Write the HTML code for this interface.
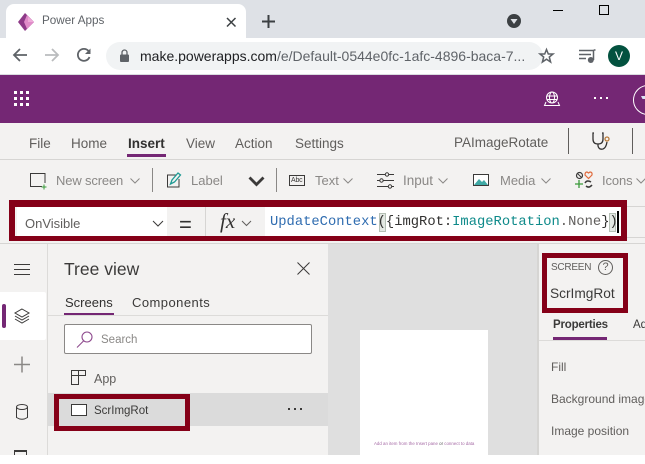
<!DOCTYPE html>
<html><head><meta charset="utf-8"><style>
html,body{margin:0;padding:0;background:#fff}
#p{position:relative;width:645px;height:464px;overflow:hidden;background:#fff;font-family:"Liberation Sans",sans-serif}
#c{position:absolute;left:0;top:0;width:645px;height:455px;overflow:hidden;background:#f3f2f1}
.a{position:absolute}
.t{position:absolute;white-space:nowrap;line-height:1}
svg{position:absolute;overflow:visible}
.m{font-family:"Liberation Mono",monospace}
</style></head><body><div id="p"><div id="c">
<!-- browser chrome -->
<div class="a" style="left:0;top:0;width:645px;height:38px;background:#dee1e6"></div>
<div class="a" style="left:6px;top:4px;width:240px;height:34px;background:#fff;border-radius:8px 8px 0 0"></div>
<svg style="left:17px;top:12px" width="20" height="20" viewBox="0 0 20 20"><path d="M8 1L17 10L8 19L1 10Z" fill="#8e3a88"/><path d="M10 3L17 10L10 17L7 10Z" fill="#e08cc9"/><path d="M11 5L17 10L11 10Z" fill="#eeaad8"/></svg>
<div class="t" style="left:42px;top:15px;font-size:11.700px;color:#5f6368">Power Apps</div>
<svg style="left:225px;top:16px" width="12" height="12"><path d="M2 2L10.500 10.500M10.500 2L2 10.500" stroke="#3c4043" stroke-width="1.500"/></svg>
<svg style="left:261px;top:14px" width="16" height="16"><path d="M7.500 1V14M1 7.500H14" stroke="#3c4043" stroke-width="2"/></svg>
<div class="a" style="left:507px;top:14px;width:14px;height:14px;border-radius:50%;background:#3c4043"></div>
<svg style="left:507px;top:14px" width="14" height="14"><path d="M3.500 5H10.500L7 10Z" fill="#dee1e6"/></svg>
<div class="a" style="left:553px;top:10px;width:10px;height:1px;background:#000"></div>
<div class="a" style="left:599px;top:5px;width:8px;height:8px;border:1px solid #000"></div>
<!-- toolbar -->
<div class="a" style="left:0;top:38px;width:645px;height:36px;background:#fff"></div>
<div class="a" style="left:0;top:74px;width:645px;height:1px;background:#dadce0"></div>
<svg style="left:12px;top:47px" width="16" height="16"><path d="M15 8H2M8 2L2 8L8 14" fill="none" stroke="#5f6368" stroke-width="1.800"/></svg>
<svg style="left:44px;top:47px" width="16" height="16"><path d="M1 8H14M8 2L14 8L8 14" fill="none" stroke="#babcbe" stroke-width="1.800"/></svg>
<svg style="left:76px;top:47px" width="16" height="16"><path d="M13.500 10A6 6 0 1 1 12.500 4L14 5.500" fill="none" stroke="#5f6368" stroke-width="1.800"/><path d="M14.500 1.500V7H9Z" fill="#5f6368"/></svg>
<div class="a" style="left:106px;top:42px;width:437px;height:28px;background:#f1f3f4;border-radius:14px"></div>
<svg style="left:119px;top:49px" width="12" height="14"><rect x="1" y="5.500" width="9" height="7.500" rx="1" fill="#5f6368"/><path d="M3 6V3.500A2.500 2.500 0 0 1 8 3.500V6" fill="none" stroke="#5f6368" stroke-width="1.300"/></svg>
<div class="t" style="left:140px;top:49px;font-size:14px;color:#202124">make.powerapps.com<span style="color:#5f6368">/e/Default-0544e0fc-1afc-4896-baca-7...</span></div>
<svg style="left:539px;top:48px" width="16" height="16"><path d="M7.500 1.500L9.300 6H14L10.300 9L11.600 14L7.500 11.200L3.400 14L4.700 9L1 6H5.700Z" fill="none" stroke="#5f6368" stroke-width="1.500"/></svg>
<svg style="left:579px;top:49px" width="18" height="14"><path d="M0 1.500H14M0 5.500H12M0 9.500H7" stroke="#5f6368" stroke-width="1.500"/><path d="M14.500 1H16.500M14.500 1V11" fill="none" stroke="#5f6368" stroke-width="1.500"/><circle cx="11.800" cy="11" r="3" fill="#5f6368"/></svg>
<div class="a" style="left:608px;top:45px;width:22px;height:22px;border-radius:50%;background:#03523f"></div>
<div class="t" style="left:608px;top:50px;width:22px;text-align:center;font-size:12px;color:#fff">V</div>
<!-- purple bar -->
<div class="a" style="left:0;top:75px;width:645px;height:48px;background:#742774"></div>
<svg style="left:14px;top:91px" width="16" height="16"><g fill="#fff"><rect x="0" y="0" width="3" height="3"/><rect x="6" y="0" width="3" height="3"/><rect x="12" y="0" width="3" height="3"/><rect x="0" y="6" width="3" height="3"/><rect x="6" y="6" width="3" height="3"/><rect x="12" y="6" width="3" height="3"/><rect x="0" y="12" width="3" height="3"/><rect x="6" y="12" width="3" height="3"/><rect x="12" y="12" width="3" height="3"/></g></svg>
<svg style="left:544px;top:91px" width="16" height="16"><g fill="none" stroke="#fff"><circle cx="8" cy="6.500" r="5.500"/><ellipse cx="8" cy="6.500" rx="2.500" ry="5.500"/><path d="M2.500 5H13.500M2.500 8.500H13.500M2 11L.5 14.500H15.500L14 11"/></g></svg>
<svg style="left:594px;top:97px" width="14" height="4"><g fill="#fff"><rect x="0" y="0" width="2" height="2"/><rect x="6" y="0" width="2" height="2"/><rect x="12" y="0" width="2" height="2"/></g></svg>
<div class="a" style="left:633px;top:85px;width:28px;height:28px;border:1px solid #fff;border-radius:50%"></div>
<svg style="left:641px;top:96px" width="4" height="4"><path d="M0 0H4V3H1.500Z" fill="#d8e4f4"/></svg>
<!-- menu -->
<div class="t" style="left:29px;top:137px;font-size:13.500px;color:#605e5c">File</div>
<div class="t" style="left:71px;top:137px;font-size:13.500px;color:#605e5c">Home</div>
<div class="t" style="left:128px;top:137px;font-size:13.500px;font-weight:bold;color:#323130">Insert</div>
<div class="a" style="left:127px;top:154px;width:39px;height:3px;background:#742774"></div>
<div class="t" style="left:186px;top:137px;font-size:13.500px;color:#605e5c">View</div>
<div class="t" style="left:235px;top:137px;font-size:13.500px;color:#605e5c">Action</div>
<div class="t" style="left:295px;top:137px;font-size:13.500px;color:#605e5c">Settings</div>
<div class="t" style="left:454px;top:136px;font-size:13.500px;color:#605e5c">PAImageRotate</div>
<div class="a" style="left:568px;top:128px;width:1px;height:26px;background:#605e5c"></div>
<div class="a" style="left:632px;top:128px;width:1px;height:26px;background:#605e5c"></div>
<svg style="left:591px;top:130px" width="20" height="22"><path d="M3 3H2V9Q2 14 7 14Q12 14 12 9V3H11M7 14V16Q8 20 12 19Q15 18 16 12" fill="none" stroke="#323130" stroke-width="1.300"/><circle cx="16" cy="9" r="2" fill="none" stroke="#b87a3a" stroke-width="1.300"/></svg>
<div class="a" style="left:0;top:159px;width:645px;height:1px;background:#d6d5d3"></div>
<!-- ribbon -->
<svg style="left:30px;top:173px" width="17" height="16"><path d="M12 13.500H.5V.5H15V10" fill="none" stroke="#3b3a39"/><path d="M11.500 14H16.500M14 11.500V16.500" stroke="#3a9a3a" stroke-width="1"/></svg>
<div class="t" style="left:56px;top:174px;font-size:13px;color:#8a8886;letter-spacing:-.15px">New screen</div>
<svg style="left:130px;top:178px" width="10" height="6"><path d="M.5 .5L5 5L9.500 .5" fill="none" stroke="#8a8886"/></svg>
<div class="a" style="left:152px;top:168px;width:1px;height:24px;background:#8a8886"></div>
<svg style="left:167px;top:172px" width="14" height="16"><path d="M12 7V15H.5V3H9" fill="none" stroke="#3b3a39"/><path d="M3.500 12L5 8L11 1L13.500 3L7.500 10Z" fill="none" stroke="#1f9a94" stroke-width="1.300"/></svg>
<div class="t" style="left:191px;top:174px;font-size:13px;color:#8a8886">Label</div>
<svg style="left:248px;top:176px" width="17" height="11"><path d="M1.500 1.500L8.500 8.500L15.500 1.500" fill="none" stroke="#3b3a39" stroke-width="2.800"/></svg>
<div class="a" style="left:276px;top:168px;width:1px;height:24px;background:#8a8886"></div>
<div class="a" style="left:289px;top:175px;width:14px;height:9px;border:1px solid #3b3a39"></div>
<div class="t" style="left:291px;top:177px;font-size:7px;color:#3b3a39;letter-spacing:-.2px">Abc</div>
<div class="t" style="left:315px;top:174px;font-size:13px;color:#8a8886">Text</div>
<svg style="left:343px;top:178px" width="10" height="6"><path d="M.5 .5L5 5L9.500 .5" fill="none" stroke="#8a8886"/></svg>
<svg style="left:377px;top:172px" width="17" height="16"><g fill="none" stroke="#3b3a39"><path d="M0 2.500H17M0 8.500H17M0 14.500H17"/><circle cx="10" cy="2.500" r="1.700" fill="#f3f2f1"/><circle cx="4.500" cy="8.500" r="1.700" fill="#f3f2f1"/><circle cx="13" cy="14.500" r="1.700" fill="#f3f2f1"/></g></svg>
<div class="t" style="left:403px;top:174px;font-size:13.500px;color:#8a8886">Input</div>
<svg style="left:438px;top:178px" width="10" height="6"><path d="M.5 .5L5 5L9.500 .5" fill="none" stroke="#8a8886"/></svg>
<svg style="left:473px;top:174px" width="16" height="13"><rect x=".5" y=".5" width="15" height="11" fill="#fff" stroke="#3b3a39"/><path d="M1 11L6 5L9 8L11 6L15 11Z" fill="#3fa9a5"/></svg>
<div class="t" style="left:500px;top:174px;font-size:13px;color:#8a8886">Media</div>
<svg style="left:541px;top:178px" width="10" height="6"><path d="M.5 .5L5 5L9.500 .5" fill="none" stroke="#8a8886"/></svg>
<svg style="left:575px;top:171px" width="19" height="18"><circle cx="4.500" cy="4.500" r="3" fill="none" stroke="#3b3a39" stroke-width="1.200"/><path d="M2.500 2.500L6.500 6.500" stroke="#3b3a39"/><path d="M13.500 7.500L10 4Q10 1 12 1L13.500 2L15 1Q17.500 1 17 4Z" fill="none" stroke="#e06a3c" stroke-width="1.200"/><path d="M0 13H8M4 9V17" stroke="#3a9a3a" stroke-width="1.300"/><path d="M10 12Q12 8.500 16 11M17 14Q14 17.500 11 15" fill="none" stroke="#3b3a39" stroke-width="1.500"/></svg>
<div class="t" style="left:602px;top:174px;font-size:13px;color:#8a8886;letter-spacing:-.1px">Icons</div>
<svg style="left:636px;top:178px" width="10" height="6"><path d="M.5 .5L5 5L9.500 .5" fill="none" stroke="#8a8886"/></svg>
<!-- formula bar -->
<div class="a" style="left:627px;top:206px;width:18px;height:1px;background:#d6d5d3"></div>
<div class="a" style="left:627px;top:237px;width:18px;height:1px;background:#d6d5d3"></div>
<div class="a" style="left:0;top:243px;width:645px;height:1px;background:#d6d5d3"></div>
<div class="a" style="left:9px;top:200px;width:618px;height:41px;background:#850018"></div>
<div class="a" style="left:15px;top:207px;width:606px;height:29px;background:#f3f2f1"></div>
<div class="a" style="left:17px;top:207px;width:150px;height:29px;background:#fff"></div>
<div class="t" style="left:25px;top:217px;font-size:13px;color:#605e5c">OnVisible</div>
<svg style="left:152px;top:220px" width="12" height="7"><path d="M1 1L6 6L11 1" fill="none" stroke="#3b3a39"/></svg>
<div class="t" style="left:179px;top:214px;font-size:22px;color:#323130">=</div>
<div class="a" style="left:205px;top:207px;width:1px;height:29px;background:#d6d5d3"></div>
<div class="t" style="left:220px;top:211px;font-family:'Liberation Serif',serif;font-style:italic;font-size:21px;color:#323130">fx</div>
<svg style="left:241px;top:220px" width="11" height="7"><path d="M1 1L5.500 5.500L10 1" fill="none" stroke="#605e5c"/></svg>
<div class="a" style="left:265px;top:207px;width:356px;height:29px;background:#fff"></div>
<div class="a" style="left:379px;top:213px;width:7px;height:19px;background:#e3e8e3;border:1px solid #b5c0b5;box-sizing:border-box"></div>
<div class="a" style="left:609px;top:213px;width:7px;height:19px;background:#e3e8e3;border:1px solid #b5c0b5;box-sizing:border-box"></div>
<div class="t m" style="left:270px;top:216px;font-size:13.800px;color:#323130"><span style="color:#2f6cb0">UpdateContext</span>({imgRot:<span style="color:#0e8a8a">ImageRotation</span><span style="color:#605e5c">.None</span>})</div>
<div class="a" style="left:617px;top:211px;width:2px;height:22px;background:#000"></div>
<!-- left rail -->
<div class="a" style="left:47px;top:244px;width:1px;height:211px;background:#dcdbd9"></div>
<svg style="left:14px;top:264px" width="17" height="11"><path d="M0 .5H16M0 5.500H16M0 10.500H16" stroke="#3b3a39"/></svg>
<div class="a" style="left:0;top:292px;width:46px;height:48px;background:#fff;border-radius:0 2px 2px 0"></div>
<div class="a" style="left:2px;top:304px;width:4px;height:24px;background:#742774;border-radius:2px"></div>
<svg style="left:14px;top:308px" width="16" height="16"><g fill="none" stroke="#3b3a39"><path d="M8 1L15 5L8 9L1 5Z"/><path d="M1 8L8 12L15 8"/><path d="M1 11L8 15L15 11"/></g></svg>
<svg style="left:14px;top:356px" width="17" height="17"><path d="M0 8.500H16M8 .5V16.500" stroke="#8a8886" stroke-width="1.500"/></svg>
<svg style="left:15px;top:404px" width="14" height="17"><g fill="none" stroke="#3b3a39"><ellipse cx="7" cy="3" rx="5.500" ry="2.500"/><path d="M1.500 3V13.500Q7 17 12.500 13.500V3"/></g></svg>
<div class="a" style="left:14px;top:450px;width:11px;height:8px;border:1px solid #3b3a39;border-top-width:2px"></div>
<!-- tree view -->
<div class="t" style="left:64px;top:261px;font-size:17.500px;color:#3b3a39">Tree view</div>
<svg style="left:297px;top:262px" width="13" height="13"><path d="M.5 .5L12.500 12.500M12.500 .5L.5 12.500" stroke="#3b3a39"/></svg>
<div class="t" style="left:65px;top:296px;font-size:13px;color:#323130">Screens</div>
<div class="t" style="left:132px;top:296px;font-size:13px;color:#3b3a39;letter-spacing:.45px">Components</div>
<div class="a" style="left:64px;top:313px;width:50px;height:2px;background:#742774"></div>
<div class="a" style="left:48px;top:315px;width:280px;height:1px;background:#dcdbd9"></div>
<div class="a" style="left:64px;top:324px;width:246px;height:28px;background:#fff;border:1px solid #8a8886;border-radius:2px"></div>
<svg style="left:76px;top:331px" width="18" height="17"><circle cx="11" cy="6" r="5" fill="none" stroke="#8e4a8e" stroke-width="1.100"/><path d="M7.500 10L1 16.500" stroke="#8e4a8e" stroke-width="1.100"/></svg>
<div class="t" style="left:101px;top:335px;font-size:11.500px;color:#8a8886">Search</div>
<svg style="left:71px;top:370px" width="15" height="15"><path d="M.5 5.500H14.500V.5H7.500V14.500H.5V.5H7.500" fill="none" stroke="#3b3a39"/></svg>
<div class="t" style="left:94px;top:373px;font-size:12.500px;color:#605e5c">App</div>
<div class="a" style="left:48px;top:393px;width:280px;height:33px;background:#dbdbdb"></div>
<div class="a" style="left:54px;top:394px;width:136px;height:37px;border:5px solid #850018;box-sizing:border-box"></div>
<div class="a" style="left:71px;top:404px;width:14px;height:10px;background:#fff;border:1px solid #3b3a39"></div>
<div class="t" style="left:94px;top:406px;font-size:11.500px;color:#3b3a39">ScrImgRot</div>
<svg style="left:288px;top:408px" width="16" height="3"><g fill="#3b3a39"><rect x="0" y="0" width="2" height="2"/><rect x="6" y="0" width="2" height="2"/><rect x="12" y="0" width="2" height="2"/></g></svg>
<!-- canvas -->
<div class="a" style="left:328px;top:244px;width:210px;height:211px;background:#dfdfdf"></div>
<div class="a" style="left:360px;top:330px;width:128px;height:125px;background:#fff"></div>
<div class="t" style="left:374px;top:442px;font-size:4.400px;color:#a56aa5">Add an item from the Insert pane <span style="color:#555">or</span> connect to data</div>
<!-- right panel -->
<div class="a" style="left:537px;top:244px;width:108px;height:211px;background:#f3f2f1;border-left:2px solid #d6d5d3;box-sizing:border-box"></div>
<div class="a" style="left:542px;top:253px;width:86px;height:60px;border:5px solid #850018;box-sizing:border-box"></div>
<div class="t" style="left:551px;top:263px;font-size:10px;color:#605e5c;letter-spacing:-.25px">SCREEN</div>
<div class="a" style="left:598px;top:260px;width:13px;height:13px;border:1px solid #605e5c;border-radius:50%"></div>
<div class="t" style="left:598px;top:262px;width:15px;text-align:center;font-size:11px;color:#605e5c">?</div>
<div class="t" style="left:550px;top:287px;font-size:13.700px;color:#3b3a39">ScrImgRot</div>
<div class="t" style="left:553px;top:320px;font-size:11.500px;font-weight:bold;color:#3b3a39;letter-spacing:-.2px">Properties</div>
<div class="t" style="left:633px;top:320px;font-size:11.500px;color:#3b3a39">Advanced</div>
<div class="a" style="left:553px;top:337px;width:54px;height:3px;background:#742774"></div>
<div class="a" style="left:539px;top:340px;width:106px;height:1px;background:#dcdbd9"></div>
<div class="t" style="left:551px;top:361px;font-size:12px;color:#605e5c">Fill</div>
<div class="t" style="left:551px;top:393px;font-size:12px;color:#605e5c">Background image</div>
<div class="t" style="left:551px;top:425px;font-size:12px;color:#605e5c">Image position</div>
</div></div></body></html>
